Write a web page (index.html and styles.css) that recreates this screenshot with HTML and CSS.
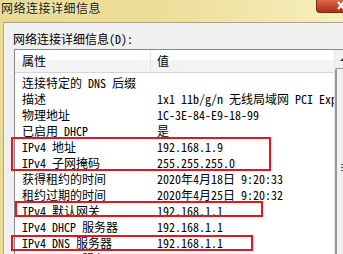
FILE: index.html
```html
<!DOCTYPE html>
<html lang="zh-CN">
<head>
  <meta charset="UTF-8">
  <title>网络连接详细信息</title>
  <link rel="stylesheet" href="styles.css">
</head>
<body>
  <div class="window">
    <div class="titlebar">
      <span class="title">网络连接详细信息</span>
      <span class="close">
        <svg width="26" height="13" viewBox="0 0 26 13">
          <path d="M21 2 L27 9 M27 2 L21 9" stroke="#fff" stroke-width="2.2" fill="none"/>
        </svg>
      </span>
    </div>
    <div class="frame">
      <div class="body">
        <div class="label">网络连接详细信息(D):</div>
        <div class="list">
          <div class="listmain">
            <div class="header">
              <div class="hcell">属性</div>
              <div class="hcell">值</div>
            </div>
            <div class="rows">
              <div class="row"><span>连接特定的 DNS 后缀</span><span></span></div>
              <div class="row"><span>描述</span><span>1x1 11b/g/n 无线局域网 PCI Express 卡</span></div>
              <div class="row"><span>物理地址</span><span>1C-3E-84-E9-18-99</span></div>
              <div class="row"><span>已启用 DHCP</span><span>是</span></div>
              <div class="row"><span>IPv4 地址</span><span>192.168.1.9</span></div>
              <div class="row"><span>IPv4 子网掩码</span><span>255.255.255.0</span></div>
              <div class="row"><span>获得租约的时间</span><span>2020年4月18日 9:20:33</span></div>
              <div class="row"><span>租约过期的时间</span><span>2020年4月25日 9:20:32</span></div>
              <div class="row"><span>IPv4 默认网关</span><span>192.168.1.1</span></div>
              <div class="row"><span>IPv4 DHCP 服务器</span><span>192.168.1.1</span></div>
              <div class="row"><span>IPv4 DNS 服务器</span><span>192.168.1.1</span></div>
              <div class="row"><span>IPv4 WINS 服务器</span><span></span></div>
            </div>
          </div>
          <div class="scrollbar">
            <div class="arrow"><svg width="17" height="17" viewBox="0 0 17 17"><path d="M5 11 L8.5 7.5 L12 11 Z" fill="#333"/></svg></div>
            <div class="thumb"><div class="grip"></div></div>
          </div>
        </div>
      </div>
    </div>
    <!-- red marks -->
    <div class="mark mark1"></div>
    <div class="mark mark2"></div>
    <div class="mark mark3"></div>
  </div>
</body>
</html>
```

FILE: styles.css
```css
body{
  margin: 0;
  font-family: "Noto Sans Mono CJK SC", "Noto Sans CJK SC", monospace;
  font-size: 12px;
  color: #000;
}
.window{
  position: relative;
  width: 343px;
  height: 254px;
  overflow: hidden;
  display: flex;
  flex-direction: column;
  background: #eadb94;
}
.titlebar{
  flex: none;
  height: 22px;
  display: flex;
  justify-content: space-between;
  align-items: flex-start;
  background: linear-gradient(90deg, #e9d98f 0%, #eddd98 45%, #f6eebd 100%);
}
.title{
  font-family: "Noto Sans CJK SC", sans-serif;
  font-size: 12px;
  line-height: 16px;
  letter-spacing: 0.5px;
  padding-left: 1px;
  color: #1a1a1a;
  text-shadow: 0 0 4px #fff8d8;
}
.close{
  width: 26px;
  height: 12px;
  margin-right: -1px;
  border: 1px solid #7a2a1c;
  border-top: none;
  border-radius: 0 0 0 4px;
  background: linear-gradient(#d96a4c, #c2412a 60%, #b0301c);
  overflow: hidden;
}
.close svg{
  display: block;
}
.frame{
  flex: 1;
  min-height: 0;
  overflow: hidden;
  padding-left: 3px;
  display: flex;
}
.body{
  flex: 1;
  background: #f0f0f0;
  border-top: 1px solid #aaa58e;
  border-left: 1px solid #a7a7a7;
  padding: 8px 0 0 9px;
}
.label{
  line-height: 16px;
  margin-bottom: 2px;
}
.list{
  margin-left: 1px;
  display: flex;
  background: #fff;
  border-top: 1px solid #828790;
  border-left: 1px solid #828790;
  height: 300px;
}
.listmain{
  width: 319px;
}
.header{
  height: 22px;
  display: grid;
  grid-template-columns: 135px 1fr;
  background: linear-gradient(#ffffff 0%, #ffffff 45%, #f3f4f5 46%, #f1f2f3 100%);
  border-bottom: 1px solid #d5d5d5;
}
.hcell{
  line-height: 22px;
  padding-left: 7px;
}
.hcell + .hcell{
  border-left: 1px solid #e3e4e6;
  padding-left: 6px;
}
.rows{
  padding-top: 2px;
}
.row{
  display: grid;
  grid-template-columns: 135px 1fr;
  height: 16px;
  line-height: 16px;
  white-space: nowrap;
}
.row span{
  overflow: hidden;
  padding-left: 7px;
}
.scrollbar{
  width: 17px;
  border-left: 1px solid #e6e6e6;
  background: #f0f0f0;
}
.arrow{
  height: 17px;
}
.arrow svg{
  display: block;
}
.thumb{
  margin-top: 1px;
  height: 220px;
  border: 1px solid #979797;
  border-left-width: 2px;
  border-radius: 2px;
  background: linear-gradient(90deg, #f4f4f4, #e4e4e4);
  display: flex;
  justify-content: center;
  padding-top: 95px;
}
.grip{
  width: 7px;
  height: 7px;
  background: repeating-linear-gradient(#555 0 1px, #ddd 1px 2px, #f4f4f4 2px 3px);
}
.mark{
  position: absolute;
  box-sizing: border-box;
  border: 2px solid #e3161b;
}
.mark1{
  left: 11px;
  top: 137px;
  width: 260px;
  height: 34px;
}
.mark2{
  left: 15px;
  top: 201px;
  width: 248px;
  height: 16px;
}
.mark3{
  left: 11px;
  top: 235px;
  width: 242px;
  height: 16px;
}
```
